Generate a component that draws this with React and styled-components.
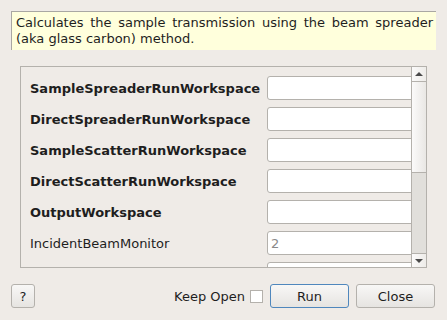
import React from 'react'
import styled, { createGlobalStyle } from 'styled-components'

const Global = createGlobalStyle`
html, body { margin: 0; padding: 0; background: #efebe7; }
body { font-family: 'DejaVu Sans', 'Liberation Sans', sans-serif; color: #1e1e1e; }
`

const Dialog = styled.div`
width: 447px;
height: 320px;
box-sizing: border-box;
padding: 11px 11px 12px 11px;
display: flex;
flex-direction: column;
background: #efebe7;
`

const Description = styled.div`
box-sizing: border-box;
height: 39px;
background: #ffffdc;
border-top: 1px solid #a9a7a3;
border-left: 1px solid #a9a7a3;
padding: 3px 3px 0 4px;
font-size: 13px;
line-height: 16px;
text-align: justify;
color: #1e1e1e;
`

const Frame = styled.div`
margin: 16px 9px 0 9px;
height: 202px;
box-sizing: border-box;
border: 1px solid #b4b1ac;
display: flex;
overflow: hidden;
`

const Props = styled.div`
flex: 1;
overflow: hidden;
padding: 9px 0 0 9px;
display: grid;
grid-template-columns: 230px 1fr;
column-gap: 7px;
row-gap: 7px;
align-content: start;
`

const Label = styled.div`
height: 24px;
display: flex;
align-items: center;
font-size: 13px;
font-weight: ${p => (p.$bold ? 700 : 400)};
white-space: nowrap;
color: #1e1e1e;
`

const Field = styled.div`
height: 24px;
box-sizing: border-box;
margin-right: -6px;
background: #ffffff;
border: 1px solid #b4b1ac;
border-radius: 3px;
display: flex;
align-items: center;
padding-left: 3px;
font-size: 13px;
color: #8a8a8a;
`

const Scrollbar = styled.div`
width: 14px;
border-left: 1px solid #b4b1ac;
display: flex;
flex-direction: column;
background: #e1dfdb;
`

const ArrowButton = styled.div`
height: ${p => p.$h}px;
flex: none;
display: flex;
align-items: center;
justify-content: center;
background: linear-gradient(to right, #fbfafa, #eeece9);
border-${p => p.$edge}: 1px solid #b4b1ac;
`

const Handle = styled.div`
height: 91px;
flex: none;
box-sizing: border-box;
background: linear-gradient(to right, #fbfafa, #e9e7e4);
border-bottom: 1px solid #b4b1ac;
`

const Arrow = styled.div`
width: 0;
height: 0;
border-left: 4px solid transparent;
border-right: 4px solid transparent;
${p => (p.$up ? 'border-bottom: 4px solid #4a4a4a;' : 'border-top: 4px solid #4a4a4a;')}
`

const Footer = styled.div`
margin-top: auto;
display: flex;
align-items: center;
padding-right: 1px;
`

const Button = styled.button`
height: 24px;
width: ${p => p.$w}px;
box-sizing: border-box;
margin: 0;
padding: 0;
font-family: 'DejaVu Sans', 'Liberation Sans', sans-serif;
font-size: 13px;
color: #1e1e1e;
border: 1px solid ${p => (p.$primary ? '#4f87bd' : '#b4b1ac')};
border-radius: 3px;
background: linear-gradient(to bottom, #f8f7f6, #e6e4e1);
`

const Spacer = styled.div`
flex: 1;
`

const KeepLabel = styled.span`
font-size: 13px;
color: #1e1e1e;
margin-right: 5px;
`

const Check = styled.span`
width: 13px;
height: 13px;
box-sizing: border-box;
background: #ffffff;
border: 1px solid #b4b1ac;
margin-right: 7px;
`

const rows = [
  { name: 'SampleSpreaderRunWorkspace', bold: true },
  { name: 'DirectSpreaderRunWorkspace', bold: true },
  { name: 'SampleScatterRunWorkspace', bold: true },
  { name: 'DirectScatterRunWorkspace', bold: true },
  { name: 'OutputWorkspace', bold: true },
  { name: 'IncidentBeamMonitor', value: '2' },
  { name: '' },
]

export default function App() {
  return (
    <Dialog>
      <Global />
      <Description>
        Calculates the sample transmission using the beam spreader (aka glass carbon) method.
      </Description>
      <Frame>
        <Props>
          {rows.map((r, i) => (
            <React.Fragment key={i}>
              <Label $bold={r.bold}>{r.name}</Label>
              <Field>{r.value}</Field>
            </React.Fragment>
          ))}
        </Props>
        <Scrollbar>
          <ArrowButton $h={14} $edge="bottom"><Arrow $up /></ArrowButton>
          <Handle />
          <Spacer />
          <ArrowButton $h={13} $edge="top"><Arrow /></ArrowButton>
        </Scrollbar>
      </Frame>
      <Footer>
        <Button $w={24}>?</Button>
        <Spacer />
        <KeepLabel>Keep Open</KeepLabel>
        <Check />
        <Button $w={79} $primary>Run</Button>
        <Button $w={79} style={{ marginLeft: 7 }}>Close</Button>
      </Footer>
    </Dialog>
  )
}
